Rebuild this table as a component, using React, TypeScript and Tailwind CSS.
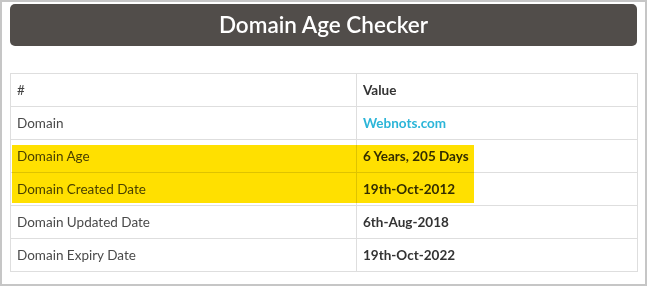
import React from "react";

const rows: { label: string; value: string; link?: boolean }[] = [
  { label: "Domain", value: "Webnots.com", link: true },
  { label: "Domain Age", value: "6 Years, 205 Days" },
  { label: "Domain Created Date", value: "19th-Oct-2012" },
  { label: "Domain Updated Date", value: "6th-Aug-2018" },
  { label: "Domain Expiry Date", value: "19th-Oct-2022" },
];

export default function App() {
  return (
    <div
      className="relative w-[647px] h-[286px] border-2 border-[#c6c6c6] bg-white px-[8px] pt-[2px]"
      style={{ fontFamily: "Lato, 'Noto Sans', sans-serif" }}
    >
      <div className="h-[42px] rounded-[5px] bg-[#514d4a] flex items-center justify-center">
        <span className="text-white text-[22.5px] font-semibold">Domain Age Checker</span>
      </div>
      <table className="mt-[27px] w-[628px] border-collapse border border-[#dedede] text-[13.5px]">
        <tbody>
          <tr className="h-[33px]">
            <td className="w-[346px] border border-[#dedede] pl-[6px] text-[#444]">#</td>
            <td className="border border-[#dedede] pl-[6px] font-bold text-[#333]">Value</td>
          </tr>
          {rows.map((r) => (
            <tr key={r.label} className="h-[33px]">
              <td className="border border-[#dedede] pl-[6px] text-[#4a4a4a]">{r.label}</td>
              <td
                className={
                  "border border-[#dedede] pl-[6px] font-bold " +
                  (r.link ? "text-[#2bb5d8]" : "text-[#333]")
                }
              >
                {r.value}
              </td>
            </tr>
          ))}
        </tbody>
      </table>
      <div className="absolute left-[10px] top-[143px] w-[462px] h-[58px] bg-[#ffe000] mix-blend-multiply pointer-events-none" />
    </div>
  );
}
